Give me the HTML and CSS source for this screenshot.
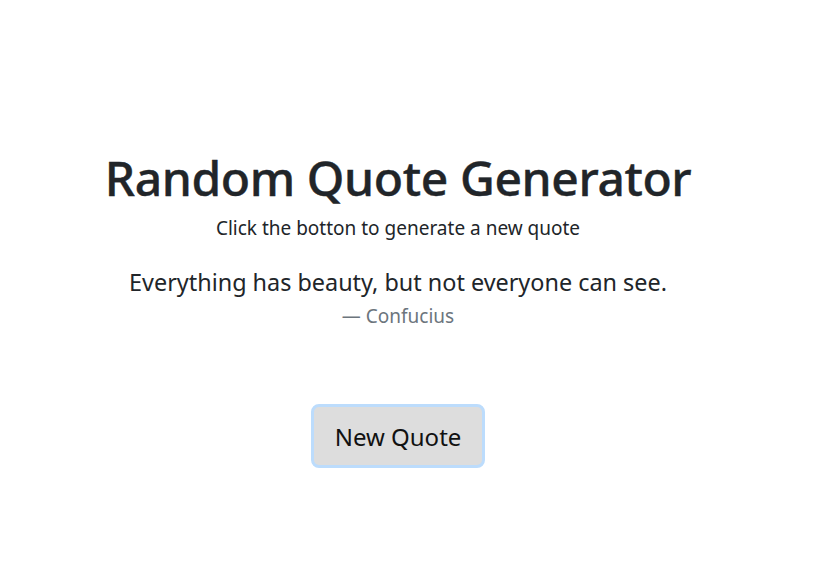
FILE: index.html
```html
<!DOCTYPE html>
<html>
<head>
<meta charset="utf-8">
<link rel="stylesheet" href="styles.css">
</head>
<body>
<main class="page">
  <h1 class="title">Random Quote Generator</h1>
  <p class="subtitle">Click the botton to generate a new quote</p>
  <blockquote class="quote">
    <p class="quote-text">Everything has beauty, but not everyone can see.</p>
    <footer class="quote-author">— Confucius</footer>
  </blockquote>
  <button class="btn">New Quote</button>
</main>
</body>
</html>
```
FILE: styles.css
```css
html, body {
  margin: 0;
  padding: 0;
  background: #fff;
}
body {
  font-family: "Noto Sans", "Open Sans", sans-serif;
  color: #212529;
}
.page {
  display: flex;
  flex-direction: column;
  align-items: center;
  padding: 142px 22px 0 0;
}
.title {
  margin: 0;
  font-size: 48px;
  font-weight: 500;
  line-height: 72px;
  letter-spacing: -0.4px;
  -webkit-text-stroke: 0.4px #212529;
}
.subtitle {
  margin: 0;
  font-size: 19px;
  line-height: 28px;
}
.quote {
  margin: 23px 0 0;
  text-align: center;
}
.quote-text {
  margin: 0;
  font-size: 23.4px;
  line-height: 34px;
}
.quote-author {
  font-size: 19px;
  line-height: 34px;
  color: #6c757d;
}
.btn {
  margin-top: 71px;
  width: 174px;
  height: 64px;
  font-family: inherit;
  font-size: 24px;
  color: #111;
  background: #dddddd;
  border: 3px solid #bcdcfc;
  border-radius: 8px;
}
```
